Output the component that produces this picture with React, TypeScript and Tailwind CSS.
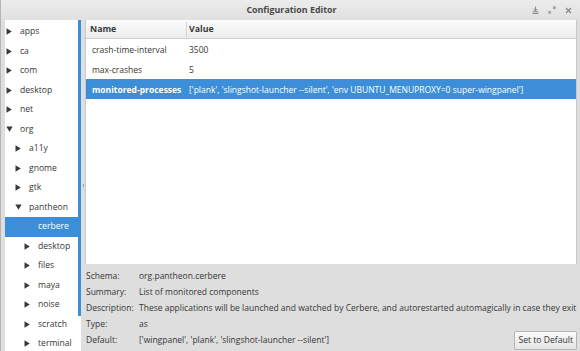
import React from "react";

const Right = () => (
  <svg width="6" height="7" viewBox="0 0 6 7" className="shrink-0">
    <path d="M0.5 0.3 L5.8 3.5 L0.5 6.7 Z" fill="#3a3a3a" />
  </svg>
);
const Down = () => (
  <svg width="7" height="6" viewBox="0 0 7 6" className="shrink-0">
    <path d="M0.3 0.5 L6.7 0.5 L3.5 5.8 Z" fill="#3a3a3a" />
  </svg>
);

type Node = { label: string; level: number; kind: "r" | "d" | "n"; sel?: boolean };
const tree: Node[] = [
  { label: "apps", level: 0, kind: "r" },
  { label: "ca", level: 0, kind: "r" },
  { label: "com", level: 0, kind: "r" },
  { label: "desktop", level: 0, kind: "r" },
  { label: "net", level: 0, kind: "r" },
  { label: "org", level: 0, kind: "d" },
  { label: "a11y", level: 1, kind: "r" },
  { label: "gnome", level: 1, kind: "r" },
  { label: "gtk", level: 1, kind: "r" },
  { label: "pantheon", level: 1, kind: "d" },
  { label: "cerbere", level: 2, kind: "n", sel: true },
  { label: "desktop", level: 2, kind: "r" },
  { label: "files", level: 2, kind: "r" },
  { label: "maya", level: 2, kind: "r" },
  { label: "noise", level: 2, kind: "r" },
  { label: "scratch", level: 2, kind: "r" },
  { label: "terminal", level: 2, kind: "r" },
];

const padFor = ["pl-[1px]", "pl-[10px]", "pl-[19px]"];

export default function App() {
  return (
    <div
      className="w-[580px] h-[351px] overflow-hidden flex flex-col bg-[#dedede] text-[8.8px] text-[#363636] border-l border-[#b5b5b5]"
      style={{ fontFamily: '"Open Sans", "Noto Sans", sans-serif' }}
    >
      {/* title bar */}
      <div className="relative h-[20px] shrink-0 flex items-center justify-center bg-gradient-to-b from-[#ececec] to-[#e0e0e0]">
        <span className="font-bold text-[#4a4a4a] text-[8.9px] pl-[2px]">Configuration Editor</span>
        <div className="absolute right-[8px] top-[6px] flex items-center gap-[9px] text-[#8a8a8a]">
          <svg width="7" height="8" viewBox="0 0 7 8">
            <path d="M3.5 0.5 V4.8 M1.6 3 L3.5 4.9 L5.4 3 M0.5 5.8 H6.5 M0.5 7.5 H6.5" stroke="#8a8a8a" strokeWidth="1" fill="none" />
          </svg>
          <svg width="8" height="8" viewBox="0 0 8 8">
            <path d="M4.5 0.5 H7.5 V3.5 Z M0.5 4.5 V7.5 H3.5 Z" fill="#8a8a8a" />
            <path d="M7 1 L5 3 M1 7 L3 5" stroke="#8a8a8a" strokeWidth="1" />
          </svg>
          <svg width="7" height="7" viewBox="0 0 7 7">
            <path d="M1 1 L6 6 M6 1 L1 6" stroke="#8a8a8a" strokeWidth="1.3" />
          </svg>
        </div>
      </div>

      {/* body */}
      <div className="flex flex-1 min-h-0">
        {/* left tree */}
        <div className="flex pl-[4px] shrink-0 text-[8.6px]">
          <div className="w-[73px] bg-white flex flex-col pt-[2px] overflow-hidden">
            {tree.map((n, i) => (
              <div
                key={i}
                className={`h-[19.5px] shrink-0 flex items-center ${padFor[n.level]} ${
                  n.sel ? "bg-[#3d8ed8] text-white" : ""
                }`}
              >
                <span className="w-[14px] flex items-center justify-start">
                  {n.kind === "r" ? <Right /> : n.kind === "d" ? <Down /> : null}
                </span>
                <span className="whitespace-nowrap">{n.label}</span>
              </div>
            ))}
          </div>
          <div className="w-[3px] bg-white flex flex-col">
            <div className="h-[296px] w-[3px] bg-[#3d8ed8]" />
            <div className="flex-1 bg-white" />
          </div>
        </div>

        {/* pane handle */}
        <div className="w-[4px] shrink-0 flex items-center justify-center">
          <div className="w-[1px] h-[3px] bg-[#a0a0a0]" />
        </div>

        {/* right */}
        <div className="flex-1 flex flex-col min-w-0 pr-[3px] text-[8.5px]">
          <div className="h-[244px] shrink-0 bg-white border-l border-r border-[#c8c8c8] flex flex-col">
            <div className="h-[19px] shrink-0 flex items-center pt-[2px] font-bold text-[8.8px] text-[#3a3a3a] bg-gradient-to-b from-[#fbfbfb] to-[#ececec] border-b border-[#cfcfcf]">
              <div className="w-[101px] pl-[4px] border-r border-[#d4d4d4] h-full flex items-center">Name</div>
              <div className="pl-[2px]">Value</div>
            </div>
            {[
              ["crash-time-interval", "3500"],
              ["max-crashes", "5"],
              [
                "monitored-processes",
                "['plank', 'slingshot-launcher --silent', 'env UBUNTU_MENUPROXY=0 super-wingpanel']",
              ],
            ].map(([k, v], i) => {
              const sel = i === 2;
              return (
                <div
                  key={i}
                  className={`h-[20px] shrink-0 flex items-center pt-[2px] whitespace-nowrap ${
                    sel ? "bg-[#3d8ed8] text-white" : ""
                  }`}
                >
                  <div className={`w-[101px] pl-[6px] ${sel ? "font-bold" : ""}`}>{k}</div>
                  <div className="pl-[2px]">{v}</div>
                </div>
              );
            })}
          </div>

          {/* details */}
          <div className="flex-1 flex flex-col pt-[4px] pl-[1px] relative">
            {[
              ["Schema:", "org.pantheon.cerbere"],
              ["Summary:", "List of monitored components"],
              [
                "Description:",
                "These applications will be launched and watched by Cerbere, and autorestarted automagically in case they exit",
              ],
              ["Type:", "as"],
              ["Default:", "['wingpanel', 'plank', 'slingshot-launcher --silent']"],
            ].map(([k, v], i) => (
              <div key={i} className="h-[16.2px] flex items-center whitespace-nowrap">
                <span className="w-[53px] shrink-0">{k}</span>
                <span>{v}</span>
              </div>
            ))}
            <div className="absolute right-0 bottom-[1px] h-[19px] px-[3px] flex items-center rounded-[2px] border border-[#b4b4b4] bg-gradient-to-b from-[#fafafa] to-[#e6e6e6] text-[#333] text-[8.6px]">
              Set to Default
            </div>
          </div>
        </div>
      </div>
    </div>
  );
}
